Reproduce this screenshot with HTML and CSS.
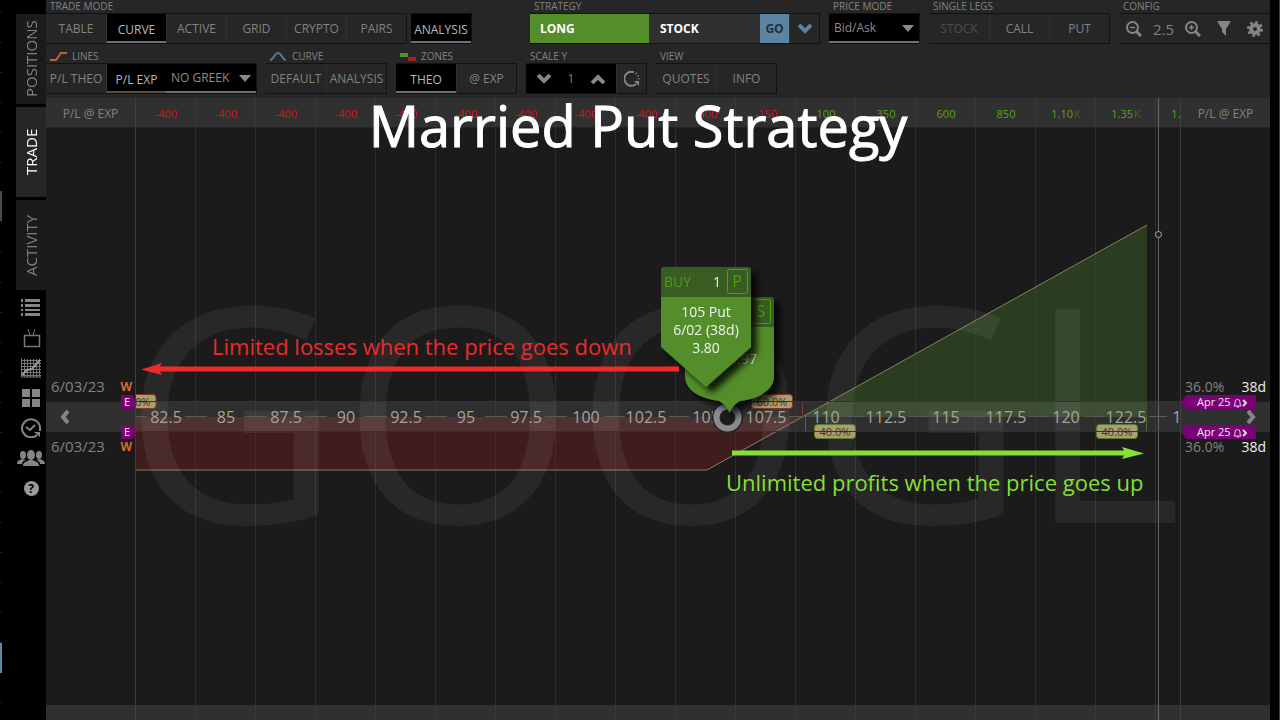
FILE: index.html
```
<!DOCTYPE html>
<html lang="en">
<head>
<meta charset="utf-8">
<title>Married Put Strategy</title>
<link rel="stylesheet" href="styles.css">
</head>
<body>
<div class="app">
  <div class="edge"><i class="edge-mark"></i><i class="edge-mark edge-blue"></i></div>
  <nav class="rail" aria-label="Sections">
    <button class="tab">POSITIONS</button>
    <button class="tab tab-on">TRADE</button>
    <button class="tab">ACTIVITY</button>
    <button class="tool" aria-label="Lists"><svg width="22" height="20" viewBox="0 0 22 20"><g fill="#858585"><path d="M1 1h2v3H1zM1 6h2v3H1zM1 11h2v2H1zM1 15h2v3H1zM5 1h15v3H5zM5 6h15v3H5zM5 11h15v2H5zM5 15h15v3H5z"/></g></svg></button>
    <button class="tool" aria-label="TV"><svg width="22" height="20" viewBox="0 0 22 20" fill="none" stroke="#777"><path d="M4.500 7.500h15v11h-15z" stroke-width="1.500"/><path d="M8 1l2 6M15 1l-2 6"/></svg></button>
    <button class="tool" aria-label="Charts"><svg width="22" height="20" viewBox="0 0 22 20" fill="none" stroke="#777"><path d="M1.500 0v19H21M4.500 1v18M7.500 1v18M10.500 1v18M13.500 1v18M16.500 1v18M19.500 1v18M1 2.500h20M1 5.500h20M1 8.500h20M1 11.500h20M1 14.500h20M1 17.500h20"/><path d="M2 17l5-5 5-1 8-9" stroke="#999" stroke-width="2"/></svg></button>
    <button class="tool" aria-label="Tiles"><svg width="22" height="20" viewBox="0 0 22 20" fill="#858585"><path d="M2 1h8v8H2zM12 1h8v8h-8zM2 11h8v8H2zM12 11h8v8h-8z"/></svg></button>
    <button class="tool" aria-label="History"><svg width="22" height="20" viewBox="0 0 22 20" fill="none" stroke="#858585" stroke-width="2"><path d="M17 17a9 9 0 1 1 3-7v3"/><path d="M6 9l4 3 5-5"/><path d="M14 14h6v5z" fill="#858585" stroke="none"/></svg></button>
    <button class="tool" aria-label="Community"><svg width="28" height="20" viewBox="0 0 28 20" fill="#858585"><ellipse cx="14" cy="7" rx="4" ry="5"/><path d="M6 18c0-4 3-4 6-6h4c3 2 6 2 6 6z"/><ellipse cx="6" cy="7" rx="3" ry="4"/><ellipse cx="22" cy="7" rx="3" ry="4"/><path d="M0 16c0-4 3-4 5-5l4 1c-3 1-4 2-4 4zM28 16c0-4-3-4-5-5l-4 1c3 1 4 2 4 4z"/></svg></button>
    <button class="tool" aria-label="Help"><span class="help">?</span></button>
  </nav>

  <main class="main">
    <h1 class="title">Married Put Strategy</h1>
    <header class="toolbar">
      <div class="row">
        <section class="group"><h2>TRADE MODE</h2>
          <div class="set"><button>TABLE</button><button class="on">CURVE</button><button>ACTIVE</button><button>GRID</button><button>CRYPTO</button><button>PAIRS</button></div>
        </section>
        <section class="group group-analysis"><h2>&nbsp;</h2>
          <div class="set"><button class="on">ANALYSIS</button></div>
        </section>
        <section class="group group-strategy"><h2>STRATEGY</h2>
          <div class="set"><button class="long">LONG</button><button class="stock">STOCK</button><button class="go">GO</button><button class="mini" aria-label="More strategies"><svg width="14" height="10" viewBox="0 0 14 10" fill="none" stroke="#5b84a2" stroke-width="4"><path d="M1 1l6 6 6-6"/></svg></button></div>
        </section>
        <section class="group"><h2><label for="pm">PRICE MODE</label></h2>
          <div class="set pick"><select id="pm" class="select-price"><option>Bid/Ask</option></select><svg class="caret" width="12" height="7" viewBox="0 0 12 7"><path d="M0 0h12L6 7z" fill="#8a8a8a"/></svg></div>
        </section>
        <section class="group"><h2>SINGLE LEGS</h2>
          <div class="set"><button disabled>STOCK</button><button>CALL</button><button>PUT</button></div>
        </section>
        <section class="group group-config"><h2>CONFIG</h2>
          <div class="set config">
            <button aria-label="Zoom out"><svg width="16" height="16" viewBox="0 0 16 16" fill="none" stroke="#858585" stroke-width="2"><circle cx="6.500" cy="6.500" r="5.500"/><path d="M10.500 10.500L15 15" stroke-width="3"/><path d="M4 6.500h5" stroke-width="1.500"/></svg></button>
            <output>2.5</output>
            <button aria-label="Zoom in"><svg width="16" height="16" viewBox="0 0 16 16" fill="none" stroke="#858585" stroke-width="2"><circle cx="6.500" cy="6.500" r="5.500"/><path d="M10.500 10.500L15 15" stroke-width="3"/><path d="M4 6.500h5M6.500 4v5" stroke-width="1.500"/></svg></button>
            <button aria-label="Filter"><svg width="14" height="15" viewBox="0 0 14 15" fill="#858585"><path d="M0 0h14L9 8v7l-4-4V8z"/></svg></button>
            <button aria-label="Settings"><svg width="16" height="16" viewBox="0 0 16 16" fill="none" stroke="#858585"><circle cx="8" cy="8" r="4" stroke-width="4"/><circle cx="8" cy="8" r="6.800" stroke-width="2.400" stroke-dasharray="2.670 2.670"/></svg></button>
          </div>
        </section>
      </div>
      <div class="row">
        <section class="group"><h2><svg width="18" height="11" viewBox="0 0 18 11" fill="none" stroke="#c0622f" stroke-width="2"><path d="M0 9h6l5-7h6"/></svg>LINES</h2>
          <div class="set pick"><button>P/L THEO</button><button class="on on-gold">P/L EXP</button><select class="select-greek" aria-label="Greek"><option>NO GREEK</option></select><svg class="caret" width="12" height="7" viewBox="0 0 12 7"><path d="M0 0h12L6 7z" fill="#8a8a8a"/></svg></div>
        </section>
        <section class="group"><h2><svg width="18" height="11" viewBox="0 0 18 11" fill="none" stroke="#527795" stroke-width="2"><path d="M0 9c4 0 4-7 8-7s4 7 8 7"/></svg>CURVE</h2>
          <div class="set"><button>DEFAULT</button><button>ANALYSIS</button></div>
        </section>
        <section class="group"><h2><svg width="17" height="10" viewBox="0 0 17 10"><path d="M0 1h8v4H0z" fill="#4e9420"/><path d="M8 5h8v4H8z" fill="#9b2624"/></svg>ZONES</h2>
          <div class="set"><button class="on">THEO</button><button>@ EXP</button></div>
        </section>
        <section class="group"><h2>SCALE Y</h2>
          <div class="set scale"><button class="step" aria-label="Decrease"><svg width="14" height="10" viewBox="0 0 14 10" fill="none" stroke="#888" stroke-width="4"><path d="M1 1l6 6 6-6"/></svg></button><output>1</output><button class="step" aria-label="Increase"><svg width="14" height="10" viewBox="0 0 14 10" fill="none" stroke="#888" stroke-width="4"><path d="M1 9l6-6 6 6"/></svg></button><button class="mini" aria-label="Reset"><svg width="16" height="16" viewBox="0 0 16 16" fill="none" stroke="#858585" stroke-width="2"><path d="M9 1a7 7 0 1 0 3 12"/><path d="M9 1a7 7 0 0 1 5 10" stroke-dasharray="1 2"/><path d="M10 10h5v5z" fill="#858585" stroke="none"/></svg></button></div>
        </section>
        <section class="group"><h2>VIEW</h2>
          <div class="set"><button>QUOTES</button><button>INFO</button></div>
        </section>
      </div>
    </header>

    <div class="chart">
      <div class="side side-left">
        <div class="head">P/L @ EXP</div>
        <div class="info info-top"><span>6/03/23</span><b>W</b></div>
        <button class="band" aria-label="Scroll left"><svg width="9" height="14" viewBox="0 0 9 14" fill="none" stroke="#858585" stroke-width="4"><path d="M8 1L3 7l5 6"/></svg></button>
        <div class="info info-bottom"><span>6/03/23</span><b>W</b></div>
        <div class="foot"></div>
        <span class="tag tag-left tag-upper">E</span>
        <span class="tag tag-left tag-lower">E</span>
      </div>

      <div class="plot">
        <div class="head cells">
          <span class="neg">-400</span><span class="neg">-400</span><span class="neg">-400</span><span class="neg">-400</span><span class="neg">-400</span><span class="neg">-400</span><span class="neg">-400</span><span class="neg">-400</span><span class="neg">-400</span><span class="neg">-400</span><span class="neg">-150</span><span>100</span><span>350</span><span>600</span><span>850</span><span>1.10<small>K</small></span><span>1.35<small>K</small></span><span>1.60<small>K</small></span>
        </div>
        <div></div>
        <div></div>
        <div></div>
        <div class="foot"></div>

        <svg class="layer" width="100%" height="100%">
          <g transform="translate(-136 -98)">
            <path d="M136 417V470H707L802 417z" fill="#d32a26" fill-opacity=".2"/>
            <path d="M802 417L1147 225V417z" fill="#569a32" fill-opacity=".27"/>
            <rect x="136" y="402" width="100%" height="30" fill="#fff" fill-opacity=".09"/>
            <path class="grid" d="M195.500 98V2000M255.500 98V2000M315.500 98V2000M375.500 98V2000M435.500 98V2000M495.500 98V2000M555.500 98V2000M615.500 98V2000M675.500 98V2000M735.500 98V2000M795.500 98V2000M855.500 98V2000M915.500 98V2000M975.500 98V2000M1035.500 98V2000M1095.500 98V2000M1155.500 98V2000"/>
            <path d="M136 470H707L1147 225" fill="none" stroke="#8c7e5c"/>
            <text class="watermark" x="123" y="523">GOOGL</text>
            <path d="M802.500 402v15" stroke="#7c3a34"/>
            <path d="M805.500 417v15M1146.500 417v15" stroke="#4c7038"/>
            <path class="ticks" d="M136 416.500h10M185 416.500h22M245 416.500h22M305 416.500h22M365 416.500h22M425 416.500h22M485 416.500h22M545 416.500h22M605 416.500h20M669 416.500h20M789 416.500h20M845 416.500h20M909 416.500h20M965 416.500h20M1029 416.500h20M1085 416.500h20M1149 416.500h18"/>
            <path d="M1158.500 98V2000" stroke="#666"/>
            <circle cx="1158.500" cy="234.500" r="3" fill="#1b1b1b" stroke="#aaa"/>
          </g>
        </svg>

        <div class="cells prices">
          <span>82.5</span><span>85</span><span>87.5</span><span>90</span><span>92.5</span><span>95</span><span>97.5</span><span>100</span><span>102.5</span><span>105</span><span>107.5</span><span>110</span><span>112.5</span><span>115</span><span>117.5</span><span>120</span><span>122.5</span><span>125</span>
        </div>

        <svg class="layer" width="100%" height="100%">
          <defs><filter id="sh" x="-20%" y="-20%" width="150%" height="150%"><feDropShadow dx="6" dy="6" stdDeviation="3" flood-color="#000" flood-opacity=".8"/></filter></defs>
          <g transform="translate(-136 -98)">
            <g class="chip">
              <rect class="loss" x="114" y="394.500" width="42" height="14" rx="3"/><text x="135" y="406">60.0%</text>
              <rect class="loss" x="751.500" y="394.500" width="41" height="14" rx="3"/><text x="772" y="406">60.0%</text>
              <rect class="gain" x="814.500" y="424.500" width="41" height="14" rx="3"/><text x="835" y="436">40.0%</text>
              <rect class="gain" x="1096.500" y="424.500" width="41" height="14" rx="3"/><text x="1117" y="436">40.0%</text>
            </g>
            <path d="M136 401.500H1180M136 431.500H1180" stroke="#73086c"/>
            <circle cx="727.500" cy="417.500" r="11" fill="#1b1b1b" stroke="#222" stroke-width="9"/>
            <circle cx="727.500" cy="417.500" r="11" fill="none" stroke="#8b8b8b" stroke-width="6"/>
            <g class="card" filter="url(#sh)">
              <path d="M689 297H770a4 4 0 0 1 4 4V376C774 392 755 399 740 401Q732 405 729.500 413Q727 405 719 401C704 399 685 392 685 376V301a4 4 0 0 1 4-4z" fill="#538e2b"/>
              <path d="M689 297H770a4 4 0 0 1 4 4V327H685V301a4 4 0 0 1 4-4z" fill="#375b20"/>
              <rect x="750.500" y="299.500" width="20" height="24" rx="2" fill="none" stroke="#4f9e0d"/>
              <text class="letter" x="761" y="317">S</text>
              <text class="spot" x="757" y="364">105.97</text>
            </g>
            <g class="card" filter="url(#sh)">
              <path d="M665 267H747a4 4 0 0 1 4 4V347L706 387L661 347V271a4 4 0 0 1 4-4z" fill="#538e2b"/>
              <path d="M665 267H747a4 4 0 0 1 4 4V297H661V271a4 4 0 0 1 4-4z" fill="#375b20"/>
              <rect x="727.500" y="269.500" width="20" height="24" rx="2" fill="none" stroke="#4f9e0d"/>
              <text class="buy" x="664" y="287">BUY</text>
              <text class="qty" x="721" y="287">1</text>
              <text class="letter" x="737" y="287">P</text>
              <text x="706" y="317">105 Put</text>
              <text x="706" y="335">6/02 (38d)</text>
              <text x="706" y="353">3.80</text>
            </g>
            <path d="M679 366.500H160L162 363L141 369.500L162 375L160 371.500H679z" fill="#ee2a2a"/>
            <path d="M732 450.500H1124L1122 447L1144 453.500L1122 459L1124 455.500H732z" fill="#86df34"/>
            <text class="note note-red" x="212" y="355">Limited losses when the price goes down</text>
            <text class="note note-green" x="726" y="491">Unlimited profits when the price goes up</text>
          </g>
        </svg>
      </div>

      <div class="side side-right">
        <div class="head">P/L @ EXP</div>
        <div class="info info-top"><span>36.0%</span><em>38d</em></div>
        <button class="band" aria-label="Scroll right"><svg width="9" height="14" viewBox="0 0 9 14" fill="none" stroke="#858585" stroke-width="4"><path d="M1 1l5 6-5 6"/></svg></button>
        <div class="info info-bottom"><span>36.0%</span><em>38d</em></div>
        <div class="foot"></div>
        <span class="tag tag-right tag-upper">Apr 25 <svg width="14" height="10" viewBox="0 0 14 10" fill="none" stroke="#e8d5e8"><path d="M1 8h7L7 6V4a2.500 2.500 0 0 0-5 0v2zM4 9h2"/><path d="M10 2l3 3-3 3" stroke-width="2"/></svg></span>
        <span class="tag tag-right tag-lower">Apr 25 <svg width="14" height="10" viewBox="0 0 14 10" fill="none" stroke="#e8d5e8"><path d="M1 8h7L7 6V4a2.500 2.500 0 0 0-5 0v2zM4 9h2"/><path d="M10 2l3 3-3 3" stroke-width="2"/></svg></span>
      </div>
    </div>
  </main>
</div>
</body>
</html>
```
FILE: styles.css
```
* { box-sizing: border-box; }
body {
  margin: 0;
  background: #000;
  color: #828282;
  font: 12px/16px "Open Sans", "Noto Sans", sans-serif;
}
button, select { font: inherit; color: inherit; background: none; border: 0; margin: 0; padding: 0; border-radius: 0; }
h1, h2 { margin: 0; font-weight: 400; }

.app { display: flex; min-height: 100vh; border-right: 1px solid #444; padding-right: 9px; overflow: hidden; }

.edge {
  flex: 0 0 16px;
  padding-top: 191px;
  background: linear-gradient(#1c1c1c 1px, transparent 1px) 0 12px / 2px 30px repeat-y;
}
.edge-mark { display: block; width: 2px; height: 30px; background: #4a4a4a; }
.edge-blue { margin-top: 422px; background: #5b8aa8; }

.rail { flex: 0 0 30px; display: flex; flex-direction: column; padding-top: 14px; }
.tab {
  height: 90px;
  margin-bottom: 3px;
  background: #1b1b1b;
  font-size: 15px;
  line-height: 30px;
  writing-mode: vertical-rl;
  transform: rotate(180deg);
  text-align: center;
}
.tab-on { background: #262626; color: #fff; }
.tool { height: 30px; display: flex; align-items: center; justify-content: center; }
.help {
  width: 15px; height: 15px; border-radius: 50%;
  background: #999; color: #000; font-weight: 700; line-height: 15px;
}

.main { flex: 1; min-width: 0; display: flex; flex-direction: column; position: relative; background: #262626; }
.title {
  position: absolute; z-index: 5; left: 0; right: 0; top: 92px;
  padding-right: 40px;
  text-align: center; color: #fff; font-size: 56px; line-height: 66px; font-weight: 400;
  -webkit-text-stroke: 1px #fff;
  white-space: nowrap; pointer-events: none;
}

.toolbar { height: 98px; }
.row { display: flex; gap: 9px; height: 50px; }
.row + .row { height: 48px; }
.group { flex: none; }
.group h2 { display: flex; align-items: center; gap: 4px; height: 13px; padding-left: 4px; font-size: 10px; line-height: 13px; }
.set { display: flex; height: 31px; border: 1px solid #121212; border-left: 0; position: relative; }
.set button { width: 60px; display: flex; align-items: center; justify-content: center; white-space: nowrap; }
.set button + button { border-left: 1px solid #303030; }
.set .on { background: #000; color: #b8b8b8; border-bottom: 2px solid #6f6f6f; padding-top: 5px; }
.set .on-gold { border-bottom-color: #5c5138; }
.set button:disabled { color: #4c4c4c; }
.group-analysis { margin-left: -5px; }
.group-strategy { margin-left: 49px; }
.set .long, .set .stock { justify-content: flex-start; padding-left: 10px; color: #fff; font-weight: 700; }
.set .long { width: 119px; background: #538e2b; }
.set .stock { width: 110px; background: #303030; }
.set .go { width: 30px; background: #5b84a2; color: #1d303d; font-weight: 700; }
.set .mini { width: 30px; }
.pick select { appearance: none; background: #000; border-bottom: 2px solid #6f6f6f; padding-left: 5px; color: #8c8c8c; }
.pick .select-price { width: 90px; }
.pick .select-greek { width: 90px; }
.caret { position: absolute; right: 5px; top: 11px; pointer-events: none; }
.group-config { flex: 1; }
.config { align-items: center; justify-content: space-between; padding: 0 3px; border-right: 0; }
.set.config button { width: 24px; border: 0; }
.config output { font-size: 15px; }
.scale output { width: 18px; background: #000; line-height: 29px; text-align: center; }
.set .step { width: 36px; background: #000; border: 0; }

.chart { flex: 1; display: flex; }
.side { flex: 0 0 90px; position: relative; }
.side, .plot { display: grid; grid-template-rows: 30px 274px 30px 1fr 15px; }
.plot { flex: 1; min-width: 0; position: relative; overflow: hidden; background: #1b1b1b; }
.side { background: #1b1b1b; }
.side-left { border-right: 1px solid #3f3f3f; }
.side-right { border-left: 1px solid #3f3f3f; }
.head, .foot { background: #303030; }
.head { border-bottom: 1px solid #222; line-height: 32px; text-align: center; }
.band { background: #303030; display: flex; align-items: center; padding: 0 14px; }
.side-right .band { justify-content: flex-end; }
.info { display: flex; align-items: flex-end; justify-content: space-between; padding: 5px 4px; line-height: 20px; }
.info-bottom { align-items: flex-start; }
.side-left .info { font-size: 15px; padding: 4px 3px 6px 5px; }
.side-right .info { font-size: 14px; }
.info b { color: #cf6b33; font-size: 12px; }
.info-top b { line-height: 18px; }
.info-bottom b { line-height: 22px; }
.info em { color: #eee; font-style: normal; }

.tag { position: absolute; height: 14px; background: #7b0077; color: #eee; font-size: 11px; line-height: 14px; white-space: nowrap; }
.tag svg { vertical-align: -2px; }
.tag-upper { top: 297px; }
.tag-lower { top: 327px; }
.tag-left { right: -1px; width: 15px; padding-left: 3px; clip-path: polygon(0 0, 80% 0, 100% 50%, 80% 100%, 0 100%); }
.tag-right { left: 0; width: 75px; padding-left: 16px; clip-path: polygon(0 50%, 7% 0, 100% 0, 100% 100%, 7% 100%); }

.cells { display: grid; grid-template-columns: repeat(18, 60px); text-align: center; }
.cells.head { font-size: 11px; color: #55a80f; }
.cells .neg { color: #cc1b14; }
.cells small { font-size: 11px; color: #3b6d12; padding-left: 1px; }
.prices { position: absolute; left: 0; top: 304px; font-size: 16px; line-height: 30px; color: #a6a29c; }

.layer { position: absolute; inset: 0; overflow: visible; }
.grid { fill: none; stroke: #404040; stroke-dasharray: 1 1; }
.ticks { fill: none; stroke: #5a5a5a; }
.watermark { font-size: 300px; fill: #fff; fill-opacity: .06; }
.chip text { font-size: 11px; fill: #3e3823; text-anchor: middle; }
.chip rect { fill: #aa9d6f; }
.chip .loss { stroke: #8c3328; }
.chip .gain { stroke: #557a2c; }
.card text { font-size: 14px; fill: #f2f2f2; text-anchor: middle; }
.card .buy { fill: #4f9e0d; text-anchor: start; }
.card .qty { text-anchor: end; }
.card .letter { fill: #4f9e0d; font-size: 16px; }
.card .spot { text-anchor: end; fill: #d5ddd0; }
.note { font-size: 22px; }
.note-red { fill: #ee2a2a; }
.note-green { fill: #86df34; }
```
